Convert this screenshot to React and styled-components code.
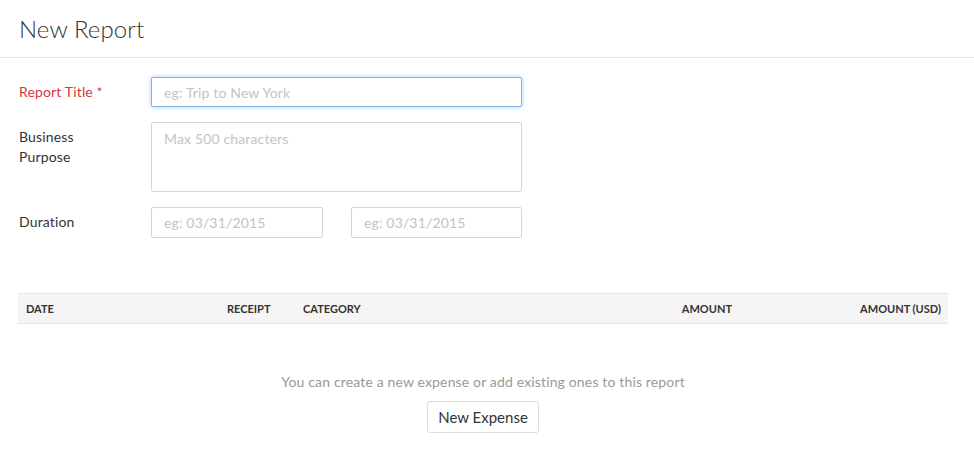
import styled, { createGlobalStyle } from 'styled-components';

const GlobalStyle = createGlobalStyle`
  body {
    margin: 0;
    background: #fff;
    font-family: Lato, "Open Sans", sans-serif;
    color: #333;
  }
  * { box-sizing: border-box; }
`

function App() {
    return (
        <Page>
            <GlobalStyle />
            <Header><h1>New Report</h1></Header>
            <Content>
                <Form>
                    <Row>
                        <Label required>Report Title *</Label>
                        <Input focused placeholder="eg: Trip to New York" width={371} />
                    </Row>
                    <Row>
                        <Label>Business<br />Purpose</Label>
                        <TextArea placeholder="Max 500 characters" />
                    </Row>
                    <Row>
                        <Label>Duration</Label>
                        <DateGroup>
                            <Input placeholder="eg: 03/31/2015" width={172} />
                            <Input placeholder="eg: 03/31/2015" width={171} />
                        </DateGroup>
                    </Row>
                </Form>
                <TableHead>
                    <Col>DATE</Col>
                    <Col>RECEIPT</Col>
                    <Col>CATEGORY</Col>
                    <Col right>AMOUNT</Col>
                    <Col right>AMOUNT (USD)</Col>
                </TableHead>
                <Empty>
                    <p>You can create a new expense or add existing ones to this report</p>
                    <Button>New Expense</Button>
                </Empty>
            </Content>
        </Page>
    )
}

export default App;

let Page = styled.div`
    width: 100%;
    min-height: 468px;
`
let Header = styled.div`
    height: 58px;
    border-bottom: 1px solid #e3e3e3;
    padding: 0 19px;
    display: flex;
    align-items: center;
    h1 {
        margin: 0;
        font-size: 24px;
        font-weight: 300;
        color: #333;
        letter-spacing: 0.1px;
    }
`
let Content = styled.div`
    padding: 19px 26px 0 18px;
`
let Form = styled.div`
    display: flex;
    flex-direction: column;
    gap: 15px;
`
let Row = styled.div`
    display: flex;
    align-items: flex-start;
`
let Label = styled.div`
    width: 133px;
    padding-left: 1px;
    padding-top: 5px;
    font-size: 14px;
    line-height: 20px;
    letter-spacing: 0.15px;
    color: ${p => p.required ? '#d2393a' : '#333'};
`
let Input = styled.input`
    width: ${p => p.width}px;
    height: ${p => p.focused ? 30 : 31}px;
    border: 1px solid ${p => p.focused ? '#7fb3e8' : '#d6d6d6'};
    box-shadow: ${p => p.focused ? '0 0 5px rgba(100, 160, 230, 0.55)' : 'none'};
    border-radius: 2px;
    padding: 0 12px;
    font-family: inherit;
    font-size: 14px;
    letter-spacing: 0.15px;
    color: #333;
    outline: none;
    &::placeholder {
        color: #c4c4c4;
    }
`
let TextArea = styled.textarea`
    width: 371px;
    height: 70px;
    border: 1px solid #d6d6d6;
    border-radius: 2px;
    padding: 6px 12px;
    font-family: inherit;
    font-size: 14px;
    line-height: 20px;
    letter-spacing: 0.15px;
    resize: none;
    outline: none;
    &::placeholder {
        color: #c4c4c4;
    }
`
let DateGroup = styled.div`
    display: flex;
    gap: 28px;
`
let TableHead = styled.div`
    margin-top: 55px;
    height: 31px;
    display: grid;
    grid-template-columns: 201px 76px 1fr 150px 209px;
    align-items: center;
    padding: 0 7px 0 8px;
    background: #f5f5f5;
    border-top: 1px solid #e6e6e6;
    border-bottom: 1px solid #e6e6e6;
`
let Col = styled.div`
    font-size: 11px;
    font-weight: 700;
    color: #333;
    text-align: ${p => p.right ? 'right' : 'left'};
`
let Empty = styled.div`
    display: flex;
    flex-direction: column;
    align-items: center;
    padding-top: 49px;
    p {
        margin: 0 0 10px;
        font-size: 14px;
        line-height: 18px;
        letter-spacing: 0.15px;
        color: #999;
    }
`
let Button = styled.button`
    height: 32px;
    padding: 0 10px;
    background: #fff;
    border: 1px solid #dcdcdc;
    border-radius: 3px;
    font-family: inherit;
    font-size: 15px;
    color: #333;
`
